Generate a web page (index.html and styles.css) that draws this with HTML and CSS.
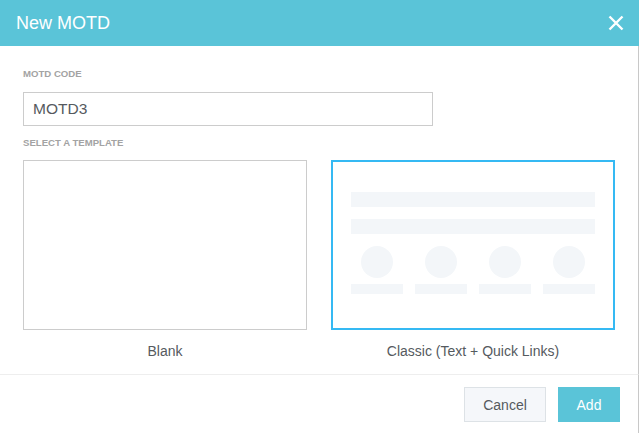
FILE: index.html
```html
<!DOCTYPE html>
<html>
<head>
<meta charset="utf-8">
<link rel="stylesheet" href="styles.css">
</head>
<body>
<div class="modal">
  <div class="header">
    <div class="title">New MOTD</div>
    <svg class="close" width="16" height="16" viewBox="0 0 16 16"><path d="M1.5 1.5L14.5 14.5M14.5 1.5L1.5 14.5" stroke="#fff" stroke-width="2.4" fill="none"/></svg>
  </div>
  <div class="content">
    <div class="label">MOTD CODE</div>
    <div class="input">MOTD3</div>
    <div class="label label2">SELECT A TEMPLATE</div>
    <div class="templates">
      <div class="tpl">
        <div class="card blank"></div>
        <div class="tpl-name">Blank</div>
      </div>
      <div class="tpl">
        <div class="card classic">
          <div class="bar"></div>
          <div class="bar"></div>
          <div class="links">
            <div class="link"><div class="dot"></div><div class="sbar"></div></div>
            <div class="link"><div class="dot"></div><div class="sbar"></div></div>
            <div class="link"><div class="dot"></div><div class="sbar"></div></div>
            <div class="link"><div class="dot"></div><div class="sbar"></div></div>
          </div>
        </div>
        <div class="tpl-name">Classic (Text + Quick Links)</div>
      </div>
    </div>
  </div>
  <div class="footer">
    <div class="btn cancel">Cancel</div>
    <div class="btn add">Add</div>
  </div>
</div>
</body>
</html>
```
FILE: styles.css
```css
html, body {
  margin: 0;
  padding: 0;
  background: #fff;
  font-family: "Liberation Sans", Arial, sans-serif;
}
.modal {
  width: 639px;
  height: 433px;
  box-sizing: border-box;
  display: flex;
  flex-direction: column;
}
.header {
  height: 46px;
  background: #5ac4d8;
  display: flex;
  align-items: center;
  justify-content: space-between;
  padding: 0 16px 0 16px;
  flex-shrink: 0;
}
.title {
  color: #fff;
  font-size: 18px;
  margin-top: 1px;
}
.close {
  display: block;
  margin-top: 0px;
  margin-right: -1px;
}
.content {
  border-right: 1px solid #c8c8c8;
  padding: 22px 23px 0 23px;
  border-bottom: 1px solid #eeeeee;
}
.label {
  font-size: 9.6px;
  font-weight: bold;
  color: #a3a3a3;
  line-height: 12px;
}
.label2 {
  margin-top: 11px;
}
.input {
  margin-top: 12px;
  width: 410px;
  height: 34px;
  box-sizing: border-box;
  border: 1px solid #cccccc;
  padding-left: 9px;
  font-size: 15.5px;
  line-height: 32px;
  color: #555a5e;
  margin-bottom: 0;
}
.templates {
  display: flex;
  gap: 24px;
  margin-top: 11px;
}
.tpl {
  width: 284px;
  display: flex;
  flex-direction: column;
  align-items: center;
}
.card {
  width: 284px;
  height: 170px;
  box-sizing: border-box;
}
.blank {
  border: 1px solid #cccccc;
}
.classic {
  border: 2px solid #35b9f3;
  padding: 30px 18px 0 18px;
}
.bar {
  height: 15px;
  background: #f3f6f9;
  margin-bottom: 12px;
}
.links {
  display: grid;
  grid-template-columns: repeat(4, 52px);
  gap: 12px;
}
.link {
  display: flex;
  flex-direction: column;
  align-items: center;
}
.dot {
  width: 32px;
  height: 32px;
  border-radius: 50%;
  background: #f3f6f9;
}
.sbar {
  margin-top: 6px;
  width: 52px;
  height: 10px;
  background: #f3f6f9;
}
.tpl-name {
  margin-top: 13px;
  font-size: 14px;
  line-height: 16px;
  color: #555a5e;
  height: 31px;
}
.footer {
  border-right: 1px solid #c8c8c8;
  flex: 1;
  display: flex;
  justify-content: flex-end;
  align-items: flex-start;
  gap: 12px;
  padding: 12px 18px 0 0;
}
.btn {
  height: 35px;
  box-sizing: border-box;
  font-size: 14px;
  display: flex;
  align-items: center;
  justify-content: center;
}
.cancel {
  width: 82px;
  background: #f5f7fa;
  border: 1px solid #dde2e6;
  color: #555a5e;
}
.add {
  width: 62px;
  background: #5ac4d8;
  color: #fff;
}
```
